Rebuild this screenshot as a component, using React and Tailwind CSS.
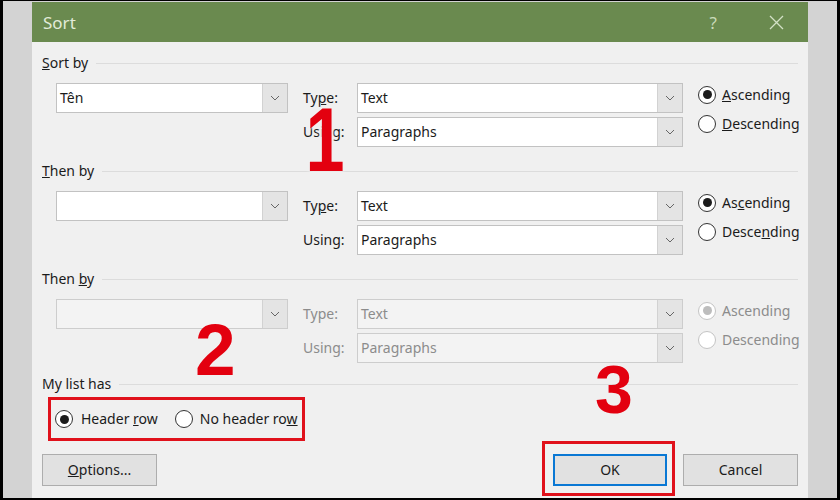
import React from "react";

function Chevron() {
  return (
    <svg width="10" height="6" viewBox="0 0 10 6" fill="none">
      <path d="M1 1 L5 5 L9 1" stroke="#666" strokeWidth="1" />
    </svg>
  );
}

function Combo({ w, text, disabled }) {
  return (
    <div
      className={
        disabled
          ? "flex shrink-0 h-[30px] border border-[#cdcdcd] bg-[#f3f3f3] text-[#8c8c8c]"
          : "flex shrink-0 h-[30px] border border-[#c2c2c2] bg-white text-[#1b1b1b]"
      }
      style={{ width: w }}
    >
      <div className="flex-1 flex items-center pl-[3px]">{text}</div>
      <div className="w-[25px] bg-[#e4e4e4] border-l border-[#d2d2d2] flex items-center justify-center">
        <Chevron />
      </div>
    </div>
  );
}

function Radio({ checked, disabled }) {
  return (
    <span
      className={
        disabled
          ? "w-[18px] h-[18px] rounded-full border border-[#c4c4c4] bg-white flex items-center justify-center shrink-0"
          : "w-[18px] h-[18px] rounded-full border border-[#333] bg-white flex items-center justify-center shrink-0"
      }
    >
      {checked && (
        <span
          className={
            disabled
              ? "w-[9px] h-[9px] rounded-full bg-[#bdbdbd]"
              : "w-[9px] h-[9px] rounded-full bg-[#1b1b1b]"
          }
        />
      )}
    </span>
  );
}

function Header({ children }) {
  return (
    <div className="flex items-center h-[20px]">
      <span className="text-[#1b1b1b] whitespace-nowrap">{children}</span>
      <div className="flex-1 h-px bg-[#dcdcdc] ml-[8px]" />
    </div>
  );
}

function SortSection({ label, left, typeLabel, usingLabel, asc, desc, disabled, mt }) {
  const lab = disabled ? "w-[54px] shrink-0 text-[#8c8c8c]" : "w-[54px] shrink-0 text-[#1b1b1b]";
  const txt = disabled ? "whitespace-nowrap text-[#8c8c8c]" : "whitespace-nowrap text-[#1b1b1b]";
  return (
    <div className={mt}>
      <Header>{label}</Header>
      <div className="flex items-start mt-[10px] ml-[14px]">
        <Combo w={232} text={left} disabled={disabled} />
        <div className="ml-[15px] shrink-0 flex flex-col gap-[4px]">
          <div className="flex items-center">
            <span className={lab}>{typeLabel}</span>
            <Combo w={326} text="Text" disabled={disabled} />
          </div>
          <div className="flex items-center">
            <span className={lab}>{usingLabel}</span>
            <Combo w={326} text="Paragraphs" disabled={disabled} />
          </div>
        </div>
        <div className="ml-[15px] -mt-[3px] flex flex-col">
          <div className="h-[29px] flex items-center gap-[6px]">
            <Radio checked disabled={disabled} />
            <span className={txt}>{asc}</span>
          </div>
          <div className="h-[29px] flex items-center gap-[6px]">
            <Radio disabled={disabled} />
            <span className={txt}>{desc}</span>
          </div>
        </div>
      </div>
    </div>
  );
}

export default function App() {
  return (
    <div className="relative w-[840px] h-[500px] bg-black pt-px pl-[3px] pr-[3px] pb-[2px] overflow-hidden font-['Noto_Sans',sans-serif] text-[14px] leading-none">
      <div className="h-full bg-[#d3d3d3] pl-[29px] pr-[29px] pt-px">
        <div className="h-full flex flex-col bg-[#f0f0f0]">
          {/* title bar */}
          <div className="h-[40px] bg-[#6a8a4f] flex items-center pl-[11px] pr-[24px] shrink-0">
            <span className="text-[17px] text-[#e2ebd9]">Sort</span>
            <div className="flex-1" />
            <span className="text-[17px] text-[#c9dab9] mr-[52px]">?</span>
            <svg width="15" height="15" viewBox="0 0 15 15">
              <path d="M1 1 L14 14 M14 1 L1 14" stroke="#d3e1c6" strokeWidth="1.3" />
            </svg>
          </div>

          {/* body */}
          <div className="flex-1 flex flex-col px-[10px] pt-[11px] pb-[11px]">
            <SortSection
              label={<><u>S</u>ort by</>}
              left="Tên"
              typeLabel={<>Ty<u>p</u>e:</>}
              usingLabel="Using:"
              asc={<><u>A</u>scending</>}
              desc={<><u>D</u>escending</>}
              mt=""
            />
            <SortSection
              label={<><u>T</u>hen by</>}
              left=""
              typeLabel={<>Ty<u>p</u>e:</>}
              usingLabel="Using:"
              asc={<>As<u>c</u>ending</>}
              desc={<>Desce<u>n</u>ding</>}
              mt="mt-[14px]"
            />
            <SortSection
              label={<>Then <u>b</u>y</>}
              left=""
              typeLabel="Type:"
              usingLabel="Using:"
              asc="Ascending"
              desc="Descending"
              disabled
              mt="mt-[14px]"
            />

            {/* my list has */}
            <div className="mt-[11px]">
              <Header>My list has</Header>
              <div className="mt-[3px] ml-[6px] w-[257px] h-[44px] border-[3px] border-[#e0111b] flex items-center pl-[4px] whitespace-nowrap">
                <Radio checked />
                <span className="ml-[8px] text-[#1b1b1b]">Header <u>r</u>ow</span>
                <span className="ml-[17px]"><Radio /></span>
                <span className="ml-[7px] text-[#1b1b1b]">No header ro<u>w</u></span>
              </div>
            </div>

            {/* buttons */}
            <div className="mt-[13px] flex items-center">
              <button className="w-[115px] h-[32px] bg-[#e1e1e1] border border-[#adadad] text-[#1b1b1b]">
                <u>O</u>ptions...
              </button>
              <div className="flex-1" />
              <div className="relative">
                <div className="absolute left-[-11px] top-[-13px] w-[133px] h-[55px] border-[3px] border-[#e0111b]" />
                <button className="relative w-[114px] h-[32px] bg-[#e1e1e1] border-2 border-[#0a78d4] text-[#1b1b1b]">
                  OK
                </button>
              </div>
              <button className="ml-[16px] w-[115px] h-[32px] bg-[#e1e1e1] border border-[#adadad] text-[#1b1b1b]">
                Cancel
              </button>
            </div>
          </div>
        </div>
      </div>

      {/* big step numbers */}
      <span className="absolute left-[300px] top-[95px] scale-x-[0.78] text-[90px] leading-none font-bold text-[#e3000f] font-['Liberation_Sans',sans-serif] [text-shadow:0_0_4px_#f0f0f0,0_0_4px_#f0f0f0,0_0_6px_#f0f0f0]">
        1
      </span>
      <span className="absolute left-[195px] top-[313px] text-[73px] leading-none font-bold text-[#e3000f] font-['Liberation_Sans',sans-serif]">
        2
      </span>
      <span className="absolute left-[595px] top-[355px] text-[68px] leading-none font-bold text-[#e3000f] font-['Liberation_Sans',sans-serif]">
        3
      </span>
    </div>
  );
}
